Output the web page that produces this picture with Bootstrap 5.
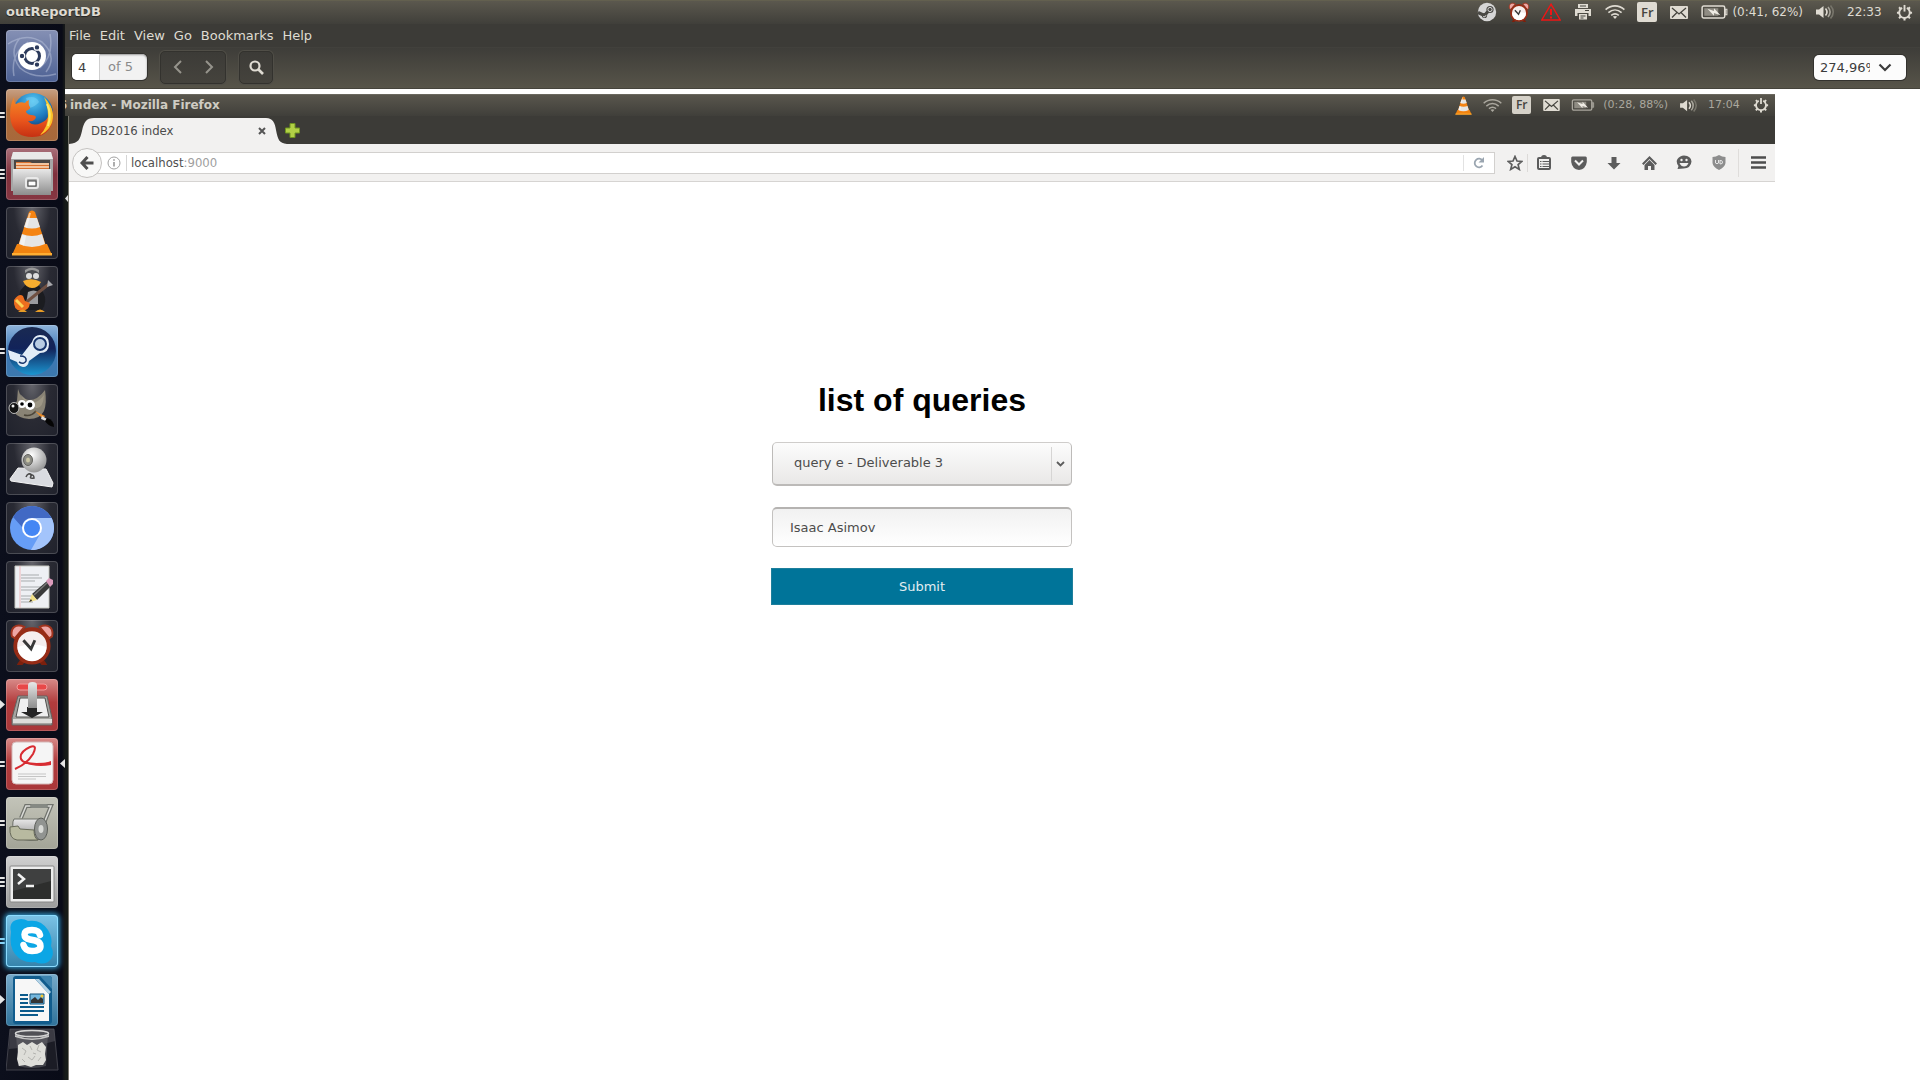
<!DOCTYPE html>
<html lang="en">
<head>
<meta charset="utf-8">
<meta name="viewport" content="width=device-width, initial-scale=1">
<title>outReportDB</title>
<link href="https://cdn.jsdelivr.net/npm/bootstrap@5.3.0/dist/css/bootstrap.min.css" rel="stylesheet">
<style>
body{font-family:"DejaVu Sans",sans-serif;font-size:13px;line-height:18px;color:#4c4c4c;background:#fff}
button,input,select{font-family:inherit}
svg{display:block;flex:none}
.plain{border:0;background:none;padding:0;color:inherit}
.panel{height:24px;background:linear-gradient(#6b6850 0,#5b584e 1px,#403f3a 24px);color:#dfdbd2;padding:0 7px 0 6px}
.panel-title{font-size:13px;font-weight:700;line-height:24px;text-shadow:0 1px 1px #222}
.tray{gap:12px;font-size:12px}
.tray-item{width:20px;display:flex;justify-content:center;align-items:center}
.kbd-tag{background:#dfdbd2;color:#45443e;border-radius:2px;width:20px;height:20px;line-height:20px;text-align:center;font-family:"Open Sans",sans-serif;font-size:13px;font-weight:600}
.clock-cell{width:37px}
.launcher{width:65px;flex:none;background:linear-gradient(90deg,#0c0f1c 0,#090b17 62px,#141718 64px);gap:7px;padding:6px 0 9px 6px}
.tile{width:52px;height:52px;border-radius:4px;position:relative;border:0;padding:0;flex:none;box-shadow:inset 0 0 0 1px rgba(255,255,255,.18);background:radial-gradient(ellipse at 50% 0,#65656c 0,#292a33 50%,#20222c 100%)}
.t-blue{background:linear-gradient(#8590b4,#4d6194)}
.t-orange{background:linear-gradient(#c7a084,#ad6b39 40%,#a7683b)}
.t-wine{background:linear-gradient(#a9707a,#7f303c 50%,#863642)}
.t-steam{background:linear-gradient(#8fb4dc,#3c76b4 50%,#3c78ad)}
.t-red{background:linear-gradient(#d88a88,#b23c3d 45%,#a83739)}
.t-sage{background:linear-gradient(#c3c4b9,#a3a497)}
.t-gray{background:linear-gradient(#d0d0d0,#9c9c9c)}
.t-skype{background:linear-gradient(#7cc3e6,#3583ab);box-shadow:0 0 5px 2px #2e8dbb,inset 0 0 0 1px #8cdcff}
.t-writer{background:linear-gradient(#77aaca,#2f729a)}
.t-trash{height:43px;margin-top:-5px;background:none;box-shadow:none}
.ticks{position:absolute;left:-6px;top:50%;width:5px;transform:translateY(-50%);display:flex;flex-direction:column;gap:2px}
.ticks i{height:2px;background:#e4e4e4;border-radius:0 1px 1px 0}
.t-skype .ticks i{background:#86d3f6}
.arrow-in{position:absolute;left:-6px;top:21px}
.arrow-out{position:absolute;left:54px;top:21px}
.viewer-menu{height:23px;background:#3c3b37;color:#dfdbd2;padding-left:4px;gap:9px;line-height:24px}
.viewer-menu a{color:inherit;text-decoration:none}
.viewer-bar{height:42px;background:linear-gradient(#45443f 0,#3e3d39 1px,#575449 41px,#34332e 42px);padding:0 14px 2px 7px}
.page-box{height:26px;width:75px;border-radius:5px;background:#f2f2f2;overflow:hidden;box-shadow:0 0 0 1px #33322e,inset 0 1px 2px #999;color:#8a8a8a}
.page-box input{width:28px;border:0;border-right:1px solid #cfcfcf;padding:0 0 0 6px;height:26px;background:#fff;color:#3c3c3c}
.tool-frame{height:33px;border:1px solid #33322e;border-radius:5px;background:linear-gradient(#3c3b37,#45433d);box-shadow:0 0 0 1px #504e47;margin-left:13px}
.tool-frame button{width:32px;height:31px;display:flex;align-items:center;justify-content:center}
.zoom-box{width:92px;height:25px;border-radius:5px;background:#fcfcfc;box-shadow:0 0 0 1px #33322e;padding-left:6px}
.zoom-box input{width:50px;border:0;padding:0;background:none;color:#3c3c3c;height:24px}
.doc-area{background:#fff;padding-top:5px}
.capture{margin-right:145px}
.ff-title{height:22px;background:linear-gradient(#7b796f 0,#59564d 1px,#403f3a 22px);color:#cfccc3;padding-right:6px;font-size:12px}
.ff-title .tray{gap:11px;font-size:11px;color:#aaa79e}
.ff-title .tray-item{width:18px}
.ff-title .kbd-tag{width:19px;height:18px;line-height:18px;font-size:12px;background:#d5d1c8}
.ff-title .clock-cell{width:34px}
.cut-char{width:2px;overflow:hidden;direction:rtl;display:inline-block;height:18px;margin-right:3px}
.edge-strip{width:4px;flex:none;background:#161b18;border-right:1px solid #77756d;position:relative}
.ff-body{background:#fff}
.tab-strip{height:28px;background:#3c3b37}
.ff-tab{width:216px;height:26px;position:relative;padding:0 19px 0 22px;font-family:"DejaVu Sans Condensed","DejaVu Sans",sans-serif}
.ff-tab>svg.tab-shape{position:absolute;left:0;top:0}
.ff-tab>*{z-index:1}
.ff-tab>svg.tab-shape{z-index:0}
.ff-nav{height:38px;background:#f2f1f0;border-bottom:1px solid #d6d4d2;padding:0 5px 0 3px;color:#5c5c5c}
.back-btn{width:30px;height:30px;border:1px solid #c4c2c0;border-radius:50%;background:#f8f8f7;display:flex;align-items:center;justify-content:center;flex:none;z-index:1;padding:0;color:#4e4e4e}
.url-box{height:22px;background:#fff;border:1px solid #d2d0ce;margin-left:-5px;padding-left:9px;font-family:"DejaVu Sans Condensed","DejaVu Sans",sans-serif}
.url-text{border-left:1px solid #d5d5d5;margin-left:5px;padding-left:4px;line-height:16px;color:#a0a0a0;outline:0}
.url-text b{font-weight:400;color:#505050}
.reload-btn{width:31px;height:16px;border-left:1px solid #e2e2e2;display:flex;align-items:center;justify-content:center}
.nav-tools{gap:19px;margin-left:12px}
.nav-tools button{width:16px;height:20px;display:flex;align-items:center;justify-content:center}
.bookmark-pair{gap:4px}
.bar-sep{width:1px;height:18px;background:#dcdad8}
.menu-cell{border-left:1px solid #dfdddb;height:28px;padding:4px 4px 0 11px;margin-left:-8px}
.query-form{width:302px;margin-top:197px;gap:21px}
.query-form h1{font:700 32px/42px "Liberation Sans",Arial,sans-serif;color:#000;white-space:nowrap}
.query-pick{position:relative;width:300px}
.query-pick select{width:100%;height:44px;border:1px solid #bdbbb9;border-top-color:#cfcdcb;border-bottom:2px solid #bcbab8;border-radius:5px;appearance:none;background:linear-gradient(#fcfcfc,#e9e8e7);padding:0 24px 2px 21px;color:#4c4c4c}
.pick-mark{position:absolute;right:4px;top:5px;width:17px;height:34px;border-left:1px solid #d6d5d4;display:flex;align-items:center;justify-content:center;pointer-events:none}
.query-text{width:300px;height:40px;border:1px solid #c4c2c0;border-top:2px solid #b5b3b1;border-radius:5px;background:linear-gradient(#f1f1f1,#fff);padding:0 17px;color:#4c4c4c}
.submit-btn{height:37px;border:1px solid #1e7f9c;border-radius:0;background:#007499;color:#e2eef2;font-size:13px;padding:0}
</style>
<script src="https://cdn.jsdelivr.net/npm/bootstrap@5.3.0/dist/js/bootstrap.bundle.min.js"></script>
</head>
<body class="d-flex flex-column min-vh-100">

<svg width="0" height="0" class="position-absolute" aria-hidden="true">
<defs>
<symbol id="wifi" viewBox="0 0 20 16"><g fill="none" stroke="currentColor" stroke-width="1.6"><path d="M.6 5.6C6 .6 14 .6 19.4 5.6M3.4 8.6c4-3.5 9.200-3.5 13.200 0M6.200 11.400c2.300-1.900 5.300-1.900 7.600 0"/></g><path d="M7.800 12.600Q10 11.200 12.200 12.600L10 15Z" fill="currentColor"/></symbol>
<symbol id="mail" viewBox="0 0 18 13"><rect width="18" height="13" rx="1" fill="#dfdbd2"/><path d="M2 2l7 6 7-6M2 11.500l5-5M16 11.500l-5-5" fill="none" stroke="#45443e" stroke-width="1.300"/></symbol>
<symbol id="battery" viewBox="0 0 25 13"><rect x="1" y="1" width="21" height="11" rx="1.500" fill="none" stroke="currentColor" stroke-width="1.400"/><rect x="3" y="3" width="13" height="7" fill="#8f8c83"/><path d="M22.500 4h1.500v5h-1.500z" fill="none" stroke="currentColor"/><path d="M6 3.500l6 2V3l6 6.500-6-2V10z" fill="#efece4"/></symbol>
<symbol id="volume" viewBox="0 0 20 16"><path d="M1 5.500h3L8.500 2v12L4 10.500H1z" fill="#dfdbd2"/><g fill="none" stroke-width="1.600"><path d="M10.500 4.500q3 3.500 0 7" stroke="#dfdbd2"/><path d="M13 3q4.200 5 0 10" stroke="#a8a59b"/><path d="M15.500 1.500q5.500 6.500 0 13" stroke="#77756b"/></g></symbol>
<symbol id="gear" viewBox="0 0 18 18"><g fill="none" stroke="#dfdbd2"><path d="M6.500 4.200a5.600 5.600 0 1 0 5 0" stroke-width="2"/><path d="M9 1v7" stroke-width="2"/><path d="M1 9.200h2.500M14.500 9.200H17M9 14.500V17.500M3.200 3.500l1.800 1.700M14.800 3.500L13 5.200M3.200 15l1.800-1.800M14.800 15L13 13.200" stroke-width="2.200"/></g></symbol>
<symbol id="alarm" viewBox="0 0 46 46"><path d="M12 36l-5 8h6l4-5zM34 36l5 8h-6l-4-5z" fill="#7b200d"/><path d="M2 14C0 5 6 0 15 4L5 16zM44 14C46 5 40 0 31 4l10 12z" fill="#eda6a4" stroke="#a0341e" stroke-width="2"/><circle cx="23" cy="24" r="17.500" fill="#f5eeee" stroke="#962c16" stroke-width="4"/><path d="M8 25a15 15 0 0 0 30 0q-15-5-30 0z" fill="#fff"/><path d="M14 18l8 9 4-9" fill="none" stroke="#383838" stroke-width="3"/></symbol>
<symbol id="cone" viewBox="0 0 42 46"><path d="M6 34h30l5 11H1z" fill="#f18410"/><path d="M1 43h40v2.500H1z" fill="#ffae32"/><path d="M18 2q3-3 6 0l11 34q-14 7-28 0z" fill="#f58413"/><path d="M16 8h10l3 9q-8 3-16 0zM11 24q10 4 20 0l3 10q-13 6-26 0z" fill="#e5e5e5"/><path d="M18 3l-4 14 2 1 4-15zM11 25l-2 9 4 2 2-10z" fill="#fff" opacity=".5"/></symbol>
<radialGradient id="gGlobe" cx=".5" cy=".2" r=".8"><stop offset="0" stop-color="#54c7f2"/><stop offset=".55" stop-color="#1d78bd"/><stop offset="1" stop-color="#10275a"/></radialGradient>
<linearGradient id="gFox" x1="0" y1="0" x2="0" y2="1"><stop offset="0" stop-color="#f58a25"/><stop offset=".6" stop-color="#e8541c"/><stop offset="1" stop-color="#c63012"/></linearGradient>
<linearGradient id="gMetal" x1="0" y1="0" x2="0" y2="1"><stop offset="0" stop-color="#e8e8e8"/><stop offset="1" stop-color="#8d8d8d"/></linearGradient>
<linearGradient id="gSteam" x1="0" y1="0" x2="0" y2="1"><stop offset="0" stop-color="#1a2a52"/><stop offset=".45" stop-color="#12235a"/><stop offset="1" stop-color="#1b95d0"/></linearGradient>
<radialGradient id="gBall" cx=".4" cy=".3" r=".7"><stop offset="0" stop-color="#fff"/><stop offset="1" stop-color="#979797"/></radialGradient>
</defs>
</svg>

<header class="panel d-flex align-items-center justify-content-between">
  <span class="panel-title">outReportDB</span>
  <div class="tray d-flex align-items-center">
    <span class="tray-item"><svg width="20" height="20" viewBox="0 0 20 20"><circle cx="10" cy="10" r="9.200" fill="#d6d6d6"/><path d="M1 10.500l6.500 3 3-3.500 3-2" stroke="#4b4a46" stroke-width="3.200" fill="none"/><circle cx="13" cy="7.500" r="3.600" fill="#4b4a46"/><circle cx="13" cy="7.500" r="2.100" fill="none" stroke="#d6d6d6"/><circle cx="7.500" cy="13.500" r="2.600" fill="#4b4a46"/><path d="M6 14.700q2.500 1 3-1.500" fill="none" stroke="#d6d6d6"/></svg></span>
    <span class="tray-item"><svg width="22" height="21"><use href="#alarm"/></svg></span>
    <span class="tray-item"><svg width="20" height="18" viewBox="0 0 20 18"><path d="M10 1.200L19.200 17H.8z" fill="none" stroke="#f01515" stroke-width="1.400"/><path d="M10 6v6M10 13.500v2" stroke="#f01515" stroke-width="2"/></svg></span>
    <span class="tray-item"><svg width="16" height="16" viewBox="0 0 16 16"><path d="M3 0h10v4H3z" fill="#dfdbd2"/><path d="M0 5h16v7h-2.500V9h-11v3H0z" fill="#dfdbd2"/><path d="M4 10h8v5.500H4z" fill="#dfdbd2"/><path d="M5.500 12h5M5.500 14h3M5 2h6M10 6.500h4" stroke="#45443e"/></svg></span>
    <span class="tray-item"><svg width="20" height="16"><use href="#wifi"/></svg></span>
    <span class="kbd-tag">Fr</span>
    <span class="tray-item"><svg width="18" height="13"><use href="#mail"/></svg></span>
    <span class="d-flex align-items-center"><svg width="27" height="14" class="me-1"><use href="#battery"/></svg><span>(0:41, 62%)</span></span>
    <span class="tray-item"><svg width="20" height="16"><use href="#volume"/></svg></span>
    <span class="clock-cell">22:33</span>
    <svg width="17" height="17"><use href="#gear"/></svg>
  </div>
</header>

<div class="d-flex flex-grow-1">
<nav class="launcher d-flex flex-column" aria-label="Launcher">
  <button class="tile t-blue" aria-label="Dash"><svg width="52" height="52" viewBox="0 0 52 52"><g fill="none" stroke="#c3cce2" opacity=".45" stroke-width="1.500"><path d="M2 14Q20 2 36 12 52 26 40 42M50 44Q28 50 14 38 2 22 14 8M44 4Q48 26 34 38M8 46Q4 24 22 12"/></g><circle cx="26" cy="26" r="14" fill="#fff"/><circle cx="26" cy="26" r="7.500" fill="none" stroke="#2c3a5b" stroke-width="3"/><g fill="#2c3a5b" stroke="#fff" stroke-width="1.200"><circle cx="16" cy="26" r="2.800"/><circle cx="31" cy="17.400" r="2.800"/><circle cx="31" cy="34.600" r="2.800"/></g></svg></button>
  <button class="tile t-orange" aria-label="Firefox"><svg width="52" height="52" viewBox="0 0 52 52"><circle cx="27" cy="24" r="20" fill="url(#gGlobe)"/><path d="M20 9q10-3 13 4-4 5-10 6z" fill="#7fd4f5" opacity=".5"/><path d="M8 8q0 6 2 7 4-3 9-1 1-2 4-3-1 5 1 7 1 2-4 4 0 3 5 4 4 0 5 2-1 5-8 4 5 6 13 2 10-4 9-18 5 8 2 19-5 13-20 13Q9 48 5 33 2 20 8 8z" fill="url(#gFox)"/><path d="M38 8q8 8 9 18 0 14-13 20 8-8 8-19 0-10-4-19z" fill="#fbc42a"/><path d="M41 15q5 10 1 22" fill="none" stroke="#ffe96b" stroke-width="2"/></svg><span class="ticks"><i></i><i></i></span></button>
  <button class="tile t-wine" aria-label="Files"><svg width="52" height="52" viewBox="0 0 52 52"><path d="M7 4h38l2 7v32H5V11z" fill="#a6a6a6"/><path d="M7 4h38l2 7H5z" fill="#e9e9e9"/><path d="M8 12h36v10H8z" fill="#4a4644"/><path d="M10 14l14 0 2 1h17v7H10z" fill="#d8712f"/><path d="M10 16h33M10 19h33" stroke="#fbe0c3" stroke-width="1.500"/><path d="M7 21h38v26H7z" fill="url(#gMetal)"/><rect x="20" y="30" width="12" height="10" rx="2" fill="#aaa" stroke="#e9e9e9" stroke-width="2"/><rect x="22" y="33" width="8" height="5" fill="#fff" stroke="#444"/></svg><span class="ticks"><i></i><i></i><i></i></span></button>
  <button class="tile" aria-label="VLC"><svg width="52" height="52" viewBox="-5 -3 52 52"><use href="#cone" width="42" height="46"/></svg></button>
  <button class="tile" aria-label="Tux Guitar"><svg width="52" height="52" viewBox="0 0 52 52"><path d="M14 25Q12 38 16 44h20q6-9 1-18l-5-8H20z" fill="#1b1c20"/><circle cx="26" cy="10" r="8.500" fill="#4a4c50"/><path d="M19 7q7-6 14 0v-3q-7-5-14 0z" fill="#999"/><circle cx="23" cy="10" r="3" fill="#ddd"/><circle cx="30" cy="10" r="3" fill="#ddd"/><path d="M17 15q9-4 18 1-3 6-9 6t-9-7z" fill="#f7ae2f"/><path d="M22 26q6-3 10 0v12H20z" fill="#9a9b9e"/><path d="M18 38l25-20" stroke="#6f5042" stroke-width="3"/><path d="M8 34q5-7 9-4l2 5 5 2q-1 8-9 8-8-1-7-11z" fill="#ec6e1f"/><path d="M10 34l7 7" stroke="#fbd356" stroke-width="3"/><path d="M12 46q5-5 9 0zM29 46q5-5 10 0z" fill="#e79c27"/><path d="M42 14l5 5-6 2z" fill="#a9a9ad"/></svg></button>
  <button class="tile t-steam" aria-label="Steam"><svg width="52" height="52" viewBox="0 0 52 52"><circle cx="26" cy="26" r="24" fill="url(#gSteam)"/><path d="M2 25l14 5 10-13q2-7 8-7 9 0 9 9t-9 9l-11 8q-1 6-6 6-5-1-6-5l-7-3z" fill="#e3edf7"/><circle cx="34" cy="19" r="6" fill="#b9cce3" stroke="#17346c" stroke-width="2"/><path d="M14 31q7 0 6 5-2 4-7 1" fill="none" stroke="#17346c" stroke-width="1.600"/></svg><span class="ticks"><i></i><i></i></span></button>
  <button class="tile" aria-label="GIMP"><svg width="52" height="52" viewBox="0 0 52 52"><path d="M12 5q3 11 11 11 9 0 16-10 2 13-1 21-4 8-15 8-11-1-15-7-1-7 3-11z" fill="#898375"/><path d="M14 10q4 9 12 9 7-1 12-8-1 14-8 13z" fill="#aaa390" opacity=".6"/><circle cx="16" cy="20" r="4" fill="#fff"/><circle cx="24" cy="21" r="5" fill="#fff"/><circle cx="16" cy="20" r="1.800"/><circle cx="24" cy="21" r="2.400"/><ellipse cx="8" cy="24" rx="5" ry="5.500" fill="#121212" stroke="#bbb"/><circle cx="7" cy="22" r="1.500" fill="#eee"/><path d="M18 31q7 2 12-4" fill="none" stroke="#4a4438" stroke-width="1.500"/><path d="M29 27l10 5-2 3z" fill="#e78a2a"/><path d="M36 32l5 3-1 2-5-2z" fill="#ddd"/><path d="M41 34q7 2 7 9-6-1-9-6z" fill="#050505"/></svg></button>
  <button class="tile" aria-label="Webcam"><svg width="52" height="52" viewBox="0 0 52 52"><path d="M12 25L4 36l1 2 41 6 1-4-7-14z" fill="#d9dbe0" stroke="#f5f5f5"/><circle cx="28" cy="17" r="12.500" fill="url(#gBall)"/><ellipse cx="22" cy="17" rx="4.500" ry="5.500" fill="#8c8c85" stroke="#61615d"/><ellipse cx="22" cy="17" rx="2" ry="2.500" fill="#c9c5a6"/><path d="M20 34q2-5 6-2-4 4 2 3 0-4-4-3" fill="none" stroke="#494949" stroke-width="1.500"/></svg></button>
  <button class="tile" aria-label="Chromium"><svg width="52" height="52" viewBox="0 0 52 52"><circle cx="26" cy="26" r="22" fill="#669df6"/><path d="M26 16h19.600A22 22 0 0 1 25 48l9.700-17z" fill="#a3c4fb"/><path d="M7 15A22 22 0 0 1 45.600 16H26q-9 0-10 9z" fill="#4169c4"/><circle cx="26" cy="26" r="10" fill="#fff"/><circle cx="26" cy="26" r="8" fill="#4486f4"/></svg></button>
  <button class="tile" aria-label="Text Editor"><svg width="52" height="52" viewBox="0 0 52 52"><path d="M9 5h34v42H9z" fill="#eef0f4" stroke="#c7c8c1"/><path d="M14 5v42" stroke="#eeb9bb"/><path d="M15 14h18M15 17h21M15 20h14M15 26h20M15 29h18M15 35h12M15 38h9M15 41h12" stroke="#a7abad" stroke-width="1"/><path d="M26 33l15-13 4 5-14 14z" fill="#393a3a"/><path d="M28 34l14-13" stroke="#777" stroke-width="1.500"/><path d="M26 33l5 6-8 2z" fill="#f1e085"/><path d="M23 41l2-3 1 2z" fill="#222"/><path d="M40 20l3-3 4 2 0 4-3 3z" fill="#dc9bbc"/></svg></button>
  <button class="tile" aria-label="Alarm Clock"><svg width="52" height="52" viewBox="-3 -3 52 52"><use href="#alarm" width="46" height="44" y="0"/></svg></button>
  <button class="tile t-red" aria-label="Downloader"><svg width="52" height="52" viewBox="0 0 52 52"><rect x="11" y="5" width="30" height="6" rx="3" fill="#e84848" stroke="#f49b9b"/><path d="M12 17h29l5 22v7H6v-7z" fill="#a5a5a1" stroke="#636360"/><path d="M14 19h25l4 19H10z" fill="#efefef" stroke="#50504e"/><path d="M7 40h39v4H7z" fill="#ddddda"/><path d="M21 28h10v5h6L26 39 15 33h6z" fill="#252525"/><path d="M22 6q0-3 4.500-3T31 6v23h-9z" fill="url(#gMetal)"/></svg><svg class="arrow-in" width="5" height="9"><path d="M0 0l5 4.500L0 9z" fill="#e5e5e5"/></svg></button>
  <button class="tile t-red" aria-label="Document Viewer"><svg width="52" height="52" viewBox="0 0 52 52"><rect x="6" y="4" width="41" height="42" rx="4" fill="#f5f5f5" stroke="#d5b8b8"/><path d="M9 31Q21 26 27 16 32 6 24 9 13 14 15 21 18 28 45 25" fill="none" stroke="#d82c32" stroke-width="2"/><path d="M17 24q13 5 28-1v4q-16 3-28-3z" fill="#d82c32"/><path d="M12 36h28M12 38.500h28M12 41h18" stroke="#c5c5c5"/></svg><span class="ticks"><i></i><i></i></span><svg class="arrow-out" width="5" height="9"><path d="M5 0L0 4.500 5 9z" fill="#e5e5e5"/></svg></button>
  <button class="tile t-sage" aria-label="Roll Printer"><svg width="52" height="52" viewBox="0 0 52 52"><path d="M15 21l5-12h25L36 31" fill="none" stroke="#70736d" stroke-width="4"/><path d="M15 21l5-12h25L36 31" fill="none" stroke="#dadbd7" stroke-width="1.500"/><rect x="24" y="7" width="18" height="4" rx="2" fill="#858983"/><path d="M8 22h27v20q-10 3-24-1l-2-4q-4-10-1-15z" fill="url(#gMetal)" stroke="#6b6e66"/><path d="M4 30l8-1 2 3 14 1q0 8 4 10H11Q3 42 4 30z" fill="#b8baa0" stroke="#666958"/><ellipse cx="35" cy="32" rx="6.500" ry="11" fill="#919491" stroke="#5b5e59"/><ellipse cx="35" cy="32" rx="2.500" ry="4" fill="#d8dad6"/></svg><span class="ticks"><i></i><i></i></span></button>
  <button class="tile t-gray" aria-label="Terminal"><svg width="52" height="52" viewBox="0 0 52 52"><rect x="4" y="10" width="44" height="36" rx="1" fill="#ededed" stroke="#868686"/><rect x="7" y="13" width="38" height="30" fill="#2d2e2d"/><path d="M7 13h38v12L7 35z" fill="#4b4d4c" opacity=".6"/><path d="M12 18l6 5-6 5M20 30h8" fill="none" stroke="#f2f2f2" stroke-width="2.500"/></svg><span class="ticks"><i></i><i></i><i></i></span></button>
  <button class="tile t-skype" aria-label="Skype"><svg width="52" height="52" viewBox="0 0 52 52"><path d="M5 17Q2 5 15 4q4 0 7 2 13-2 20 9 5 8 3 16 5 10-3 16-6 3-13 0-12 2-20-8-6-8-4-22z" fill="#0ba6e5"/><path d="M34 20q-1-5-8-5-7.500 0-7.500 4.500 0 4 5.500 5l5 1q5.500 1.500 5.500 5.500 0 5-8.500 5-7 0-8.500-6" fill="none" stroke="#fff" stroke-width="6.500" stroke-linecap="round"/></svg><span class="ticks"><i></i><i></i></span></button>
  <button class="tile t-writer" aria-label="LibreOffice Writer"><svg width="52" height="52" viewBox="0 0 52 52"><rect x="7" y="2" width="39" height="48" rx="3" fill="#115c8d"/><path d="M34 2h9q3 0 3 3v10z" fill="#3c82ae"/><path d="M9 5h20l14 15v27H9z" fill="#f7f7f7"/><path d="M29 5h4l12 13-2 2z" fill="#b3d2e5"/><path d="M14 21h8M14 25h8M14 29h8M14 33h24M14 37h24M14 41h18" stroke="#0c5b8c" stroke-width="2"/><path d="M24 20h14v10H24z" fill="#75b7dd" stroke="#14527a"/><path d="M25 29v-3l4-3 3 3 3-3 2 2v4z" fill="#343434"/><circle cx="36" cy="22" r="1.500" fill="#f8c82f"/></svg><svg class="arrow-in" width="5" height="9"><path d="M0 0l5 4.500L0 9z" fill="#e5e5e5"/></svg></button>
  <button class="tile t-trash" aria-label="Trash"><svg width="54" height="43" viewBox="0 0 54 43"><path d="M4 1h44l4 41H0z" fill="#1b1c25" stroke="#40414a"/><path d="M4 1h44l1 12q-20 6-46 8z" fill="#686870" opacity=".4"/><path d="M10 5l2 33q14 4 28 0l2-33z" fill="#76767a" opacity=".45"/><path d="M12 17l5-3 4 3 5-3 5 3 5-3 4 5-1 7 1 6-3 5-7 0-5 2-6-2-6 1-2-7 1-7z" fill="#deded9"/><path d="M16 20l4 3-2 4M24 18l2 4M33 17l-2 5 4 2M22 29l4 3 3-4M35 29l-3 4M16 31l3 3M27 25l3 1" fill="none" stroke="#b4b4b0"/><ellipse cx="26" cy="5.500" rx="16.500" ry="3" fill="#505056" stroke="#d6d6d6" stroke-width="1.500"/><path d="M9 7q17 7 34 0v2q-17 6-34 0z" fill="#c4c4c4"/></svg></button>
</nav>

<main class="flex-grow-1 d-flex flex-column">
  <nav class="viewer-menu d-flex" aria-label="Menu">
    <a href="#">File</a><a href="#">Edit</a><a href="#">View</a><a href="#">Go</a><a href="#">Bookmarks</a><a href="#">Help</a>
  </nav>
  <div class="viewer-bar d-flex align-items-center">
    <div class="page-box d-flex align-items-center"><input type="text" value="4" aria-label="Page"><span class="ps-2">of 5</span></div>
    <div class="tool-frame d-flex">
      <button class="plain" aria-label="Previous page"><svg width="9" height="14" viewBox="0 0 9 14"><path d="M8 1L2 7l6 6" fill="none" stroke="#96948c" stroke-width="2"/></svg></button>
      <button class="plain" aria-label="Next page"><svg width="9" height="14" viewBox="0 0 9 14"><path d="M1 1l6 6-6 6" fill="none" stroke="#96948c" stroke-width="2"/></svg></button>
    </div>
    <div class="tool-frame"><button class="plain" aria-label="Find"><svg width="15" height="15" viewBox="0 0 15 15"><circle cx="6" cy="6" r="4.500" fill="none" stroke="#dfdbd2" stroke-width="2.200"/><path d="M9.500 9.500l4.500 4.500" stroke="#dfdbd2" stroke-width="2.600"/></svg></button></div>
    <div class="zoom-box ms-auto d-flex align-items-center"><input type="text" value="274,96%" aria-label="Zoom"><button class="plain ms-2" aria-label="Zoom levels"><svg width="14" height="9" viewBox="0 0 14 9"><path d="M1.500 1.500L7 7l5.500-5.500" fill="none" stroke="#3c3c3c" stroke-width="2.200"/></svg></button></div>
  </div>

  <div class="doc-area flex-grow-1 d-flex">
    <section class="capture flex-grow-1 d-flex flex-column">
      <div class="ff-title d-flex align-items-center justify-content-between">
        <span class="d-flex fw-bold"><span class="cut-char">6</span>index - Mozilla Firefox</span>
        <div class="tray d-flex align-items-center">
          <span class="tray-item"><svg width="17" height="19"><use href="#cone"/></svg></span>
          <span class="tray-item"><svg width="19" height="15"><use href="#wifi"/></svg></span>
          <span class="kbd-tag">Fr</span>
          <span class="tray-item"><svg width="17" height="12"><use href="#mail"/></svg></span>
          <span class="d-flex align-items-center"><svg width="24" height="12" class="me-1"><use href="#battery"/></svg><span class="ps-1">(0:28, 88%)</span></span>
          <span class="tray-item"><svg width="19" height="15"><use href="#volume"/></svg></span>
          <span class="clock-cell">17:04</span>
          <svg width="16" height="16"><use href="#gear"/></svg>
        </div>
      </div>
      <div class="d-flex flex-grow-1">
        <div class="edge-strip"><svg class="position-absolute start-0" style="top:79px" width="3" height="7"><path d="M3 0L0 3.500 3 7z" fill="#ddd"/></svg></div>
        <div class="ff-body flex-grow-1 d-flex flex-column">
          <div class="tab-strip d-flex align-items-end">
            <div class="ff-tab d-flex align-items-center justify-content-between">
              <svg class="tab-shape" width="218" height="26" viewBox="0 0 218 26"><path d="M0 26C10 25 11 21 13 13 15 4 17 0 25 0H197C204 0 206 5 207 12 209 22 210 25 218 26Z" fill="#f2f1f0"/></svg>
              <span>DB2016 index</span>
              <button class="plain" aria-label="Close tab"><svg width="8" height="8" viewBox="0 0 8 8"><path d="M1 1l6 6M7 1L1 7" stroke="#555" stroke-width="2"/></svg></button>
            </div>
            <button class="plain align-self-center" aria-label="New tab"><svg width="15" height="15" viewBox="0 0 15 15"><path d="M5 .5h5V5h4.500v5H10v4.500H5V10H.5V5H5z" fill="#b2d146" stroke="#6f9420"/></svg></button>
          </div>
          <div class="ff-nav d-flex align-items-center">
            <button class="back-btn" aria-label="Back"><svg width="14" height="14" viewBox="0 0 14 14"><path d="M7.500 1L2 7l5.500 6M2 7h11.500" fill="none" stroke="currentColor" stroke-width="3"/></svg></button>
            <div class="url-box flex-grow-1 d-flex align-items-center">
              <svg width="14" height="14" viewBox="0 0 14 14"><circle cx="7" cy="7" r="6" fill="none" stroke="#a3a3a3"/><path d="M7 6v4.500M7 3.200V4.800" stroke="#8a8a8a" stroke-width="1.400"/></svg>
              <div class="url-text flex-grow-1" role="textbox" contenteditable="true" spellcheck="false" aria-label="Address"><b>localhost</b>:9000</div>
              <button class="reload-btn border-top-0 border-end-0 border-bottom-0 bg-white p-0" aria-label="Reload"><svg width="12" height="12" viewBox="0 0 12 12"><path d="M9.500 8.500a4.300 4.300 0 1 1 0-5" fill="none" stroke="#9aa5b0" stroke-width="1.800"/><path d="M11 0v5.500H5.500z" fill="#9aa5b0"/></svg></button>
            </div>
            <div class="nav-tools d-flex align-items-center">
              <div class="bookmark-pair d-flex align-items-center">
              <button class="plain" aria-label="Bookmark"><svg width="16" height="16" viewBox="0 0 16 16"><path d="M8 1.500l2 4.500 4.800.4-3.700 3.200 1.200 4.800L8 11.800l-4.300 2.600 1.200-4.800L1.200 6.400 6 6z" fill="none" stroke="currentColor" stroke-width="1.700"/></svg></button>
              <span class="bar-sep"></span>
              <button class="plain ms-1" aria-label="Bookmarks"><svg width="14" height="15" viewBox="0 0 14 15"><path d="M4 3q0-3 3-3t3 3z" fill="currentColor"/><rect x="1" y="3" width="12" height="11" rx="1" fill="none" stroke="currentColor" stroke-width="2"/><path d="M3 6.500h1.500M5.500 6.500H12M3 9h1.500M5.500 9H12M3 11.500h1.500M5.500 11.500H12" stroke="currentColor" stroke-width="1.200"/></svg></button>
              </div>
              <button class="plain" aria-label="Pocket"><svg width="16" height="14" viewBox="0 0 16 14"><path d="M1.500.5h13q1.300 0 1.300 1.500v4q-1 7-7.800 8-6.800-1-7.800-8V2Q.2.500 1.500.5z" fill="currentColor"/><path d="M4 4.500l4 4 4-4" fill="none" stroke="#f2f1f0" stroke-width="2"/></svg></button>
              <button class="plain" aria-label="Downloads"><svg width="14" height="14" viewBox="0 0 14 14"><path d="M4.500 1h5v6h4L7 13.500.5 7h4z" fill="currentColor"/></svg></button>
              <button class="plain" aria-label="Home"><svg width="15" height="14" viewBox="0 0 15 14"><path d="M7.500 0L15 7.500 13.500 9l-6-6-6 6L0 7.500z" fill="currentColor"/><path d="M2.500 9l5-5 5 5v5H9v-4H6v4H2.500z" fill="currentColor"/></svg></button>
              <button class="plain" aria-label="Chat"><svg width="16" height="15" viewBox="0 0 16 15"><path d="M8 .5q7 .5 7.500 6-.500 6.500-8 7L1.500 14l1-3Q-.5 7 1.500 4 4 .5 8 .5z" fill="currentColor"/><circle cx="5.500" cy="5" r="1.200" fill="#f2f1f0"/><circle cx="10.500" cy="5" r="1.200" fill="#f2f1f0"/><path d="M3.500 8h9q-1.500 3.500-4.500 3.500T3.500 8z" fill="#f2f1f0"/></svg></button>
              <button class="plain" aria-label="uBlock"><svg width="14" height="15" viewBox="0 0 14 15"><path d="M7 0q3 2 6.500 2v6Q13 12 7 15 1 12 .5 8V2Q4 2 7 0z" fill="#8d8d8d"/><path d="M3.500 5v3q1.500 1.500 3 0V5M8 5v4q3 0 2.500-2-.3-2-2.500-1.500" fill="none" stroke="#e6e6e6" stroke-width="1"/></svg></button>
              <div class="menu-cell"><button class="plain" aria-label="Open menu"><svg width="15" height="13" viewBox="0 0 15 13"><path d="M0 1.500h15M0 6.500h15M0 11.500h15" stroke="#4d4d4d" stroke-width="2.600"/></svg></button></div>
            </div>
          </div>
          <form class="query-form mx-auto d-flex flex-column align-items-center">
            <h1 class="m-0">list of queries</h1>
            <div class="query-pick">
              <select aria-label="Query"><option>query e - Deliverable 3</option></select>
              <span class="pick-mark"><svg width="9" height="6" viewBox="0 0 9 6"><path d="M1 1l3.500 3.500L8 1" fill="none" stroke="#5c5c5c" stroke-width="1.800"/></svg></span>
            </div>
            <input class="query-text" type="text" value="Isaac Asimov" aria-label="Author">
            <button class="submit-btn w-100" type="button">Submit</button>
          </form>
        </div>
      </div>
    </section>
  </div>
</main>
</div>
</body>
</html>
